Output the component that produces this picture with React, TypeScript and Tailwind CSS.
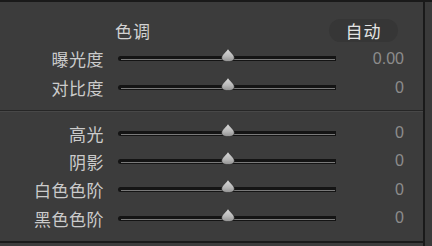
import React from "react";

const cjk = { fontFamily: '"Noto Sans CJK SC", "Noto Sans", sans-serif' };
const num = { fontFamily: '"Liberation Sans", Arial, sans-serif' };

function Thumb() {
  return (
    <svg
      width="14"
      height="14"
      viewBox="0 0 14 14"
      className="absolute left-[103px] top-[-8px]"
    >
      <defs>
        <linearGradient id="tg" x1="0" y1="0" x2="0" y2="1">
          <stop offset="0" stopColor="#dcdcdc" />
          <stop offset="0.6" stopColor="#b8b8b8" />
          <stop offset="1" stopColor="#909090" />
        </linearGradient>
      </defs>
      <path
        d="M7 0.4 C7.9 3.2 13.3 6.2 13.3 9.8 C13.3 12.2 10.9 13.6 7 13.6 C3.1 13.6 0.7 12.2 0.7 9.8 C0.7 6.2 6.1 3.2 7 0.4 Z"
        fill="url(#tg)"
        stroke="#2a2a2a"
        strokeWidth="0.6"
      />
    </svg>
  );
}

function Row({ label, value, h }: { label: string; value: string; h: string }) {
  return (
    <div className={`flex items-center ${h}`}>
      <div
        className="w-[104px] text-right text-[17px] leading-none text-[#cbcbcb] tracking-[0.5px]"
        style={cjk}
      >
        {label}
      </div>
      <div className="ml-[14px] relative w-[218px] h-[5px]">
        <div className="absolute inset-0 rounded-l-full rounded-r-[1px] bg-[#141414]" />
        <div className="absolute left-[3px] right-[1px] top-[3px] h-[1px] bg-[#7a7a7a]" />
        <Thumb />
      </div>
      <div
        className="w-[68px] text-right text-[16px] leading-none text-[#8c8c8c]"
        style={num}
      >
        {value}
      </div>
    </div>
  );
}

export default function App() {
  return (
    <div className="w-[432px] h-[246px] bg-[#3c3c3c] flex flex-col overflow-hidden">
      <div className="h-[2px] bg-[#1a1a1a] shrink-0" />
      <div className="flex flex-1">
        <div className="w-[423px] flex flex-col">
          <div className="h-[14px]" />
          <div className="flex items-center h-[28px]">
            <div
              className="w-[266px] text-center text-[17px] leading-none text-[#d2d2d2] tracking-[1px]"
              style={cjk}
            >
              色调
            </div>
            <div className="ml-[63px] w-[69px] h-[23px] rounded-full bg-[#363636] flex items-center justify-center">
              <span
                className="text-[17px] leading-none text-[#e4e4e4] tracking-[1px]"
                style={cjk}
              >
                自动
              </span>
            </div>
          </div>
          <Row label="曝光度" value="0.00" h="h-[29px]" />
          <Row label="对比度" value="0" h="h-[29px]" />
          <div className="pt-[8px] pb-[7px]">
            <div className="h-[1px] bg-[#262626]" />
            <div className="h-[1px] bg-[#484848]" />
          </div>
          <Row label="高光" value="0" h="h-[28px]" />
          <Row label="阴影" value="0" h="h-[28px]" />
          <Row label="白色色阶" value="0" h="h-[29px]" />
          <Row label="黑色色阶" value="0" h="h-[28px]" />
          <div className="h-[9px]" />
          <div className="h-[2px] bg-[#1a1a1a]" />
        </div>
        <div className="w-[2px] bg-[#1a1a1a]" />
        <div className="flex-1 bg-[#3a3a3a]" />
      </div>
    </div>
  );
}
